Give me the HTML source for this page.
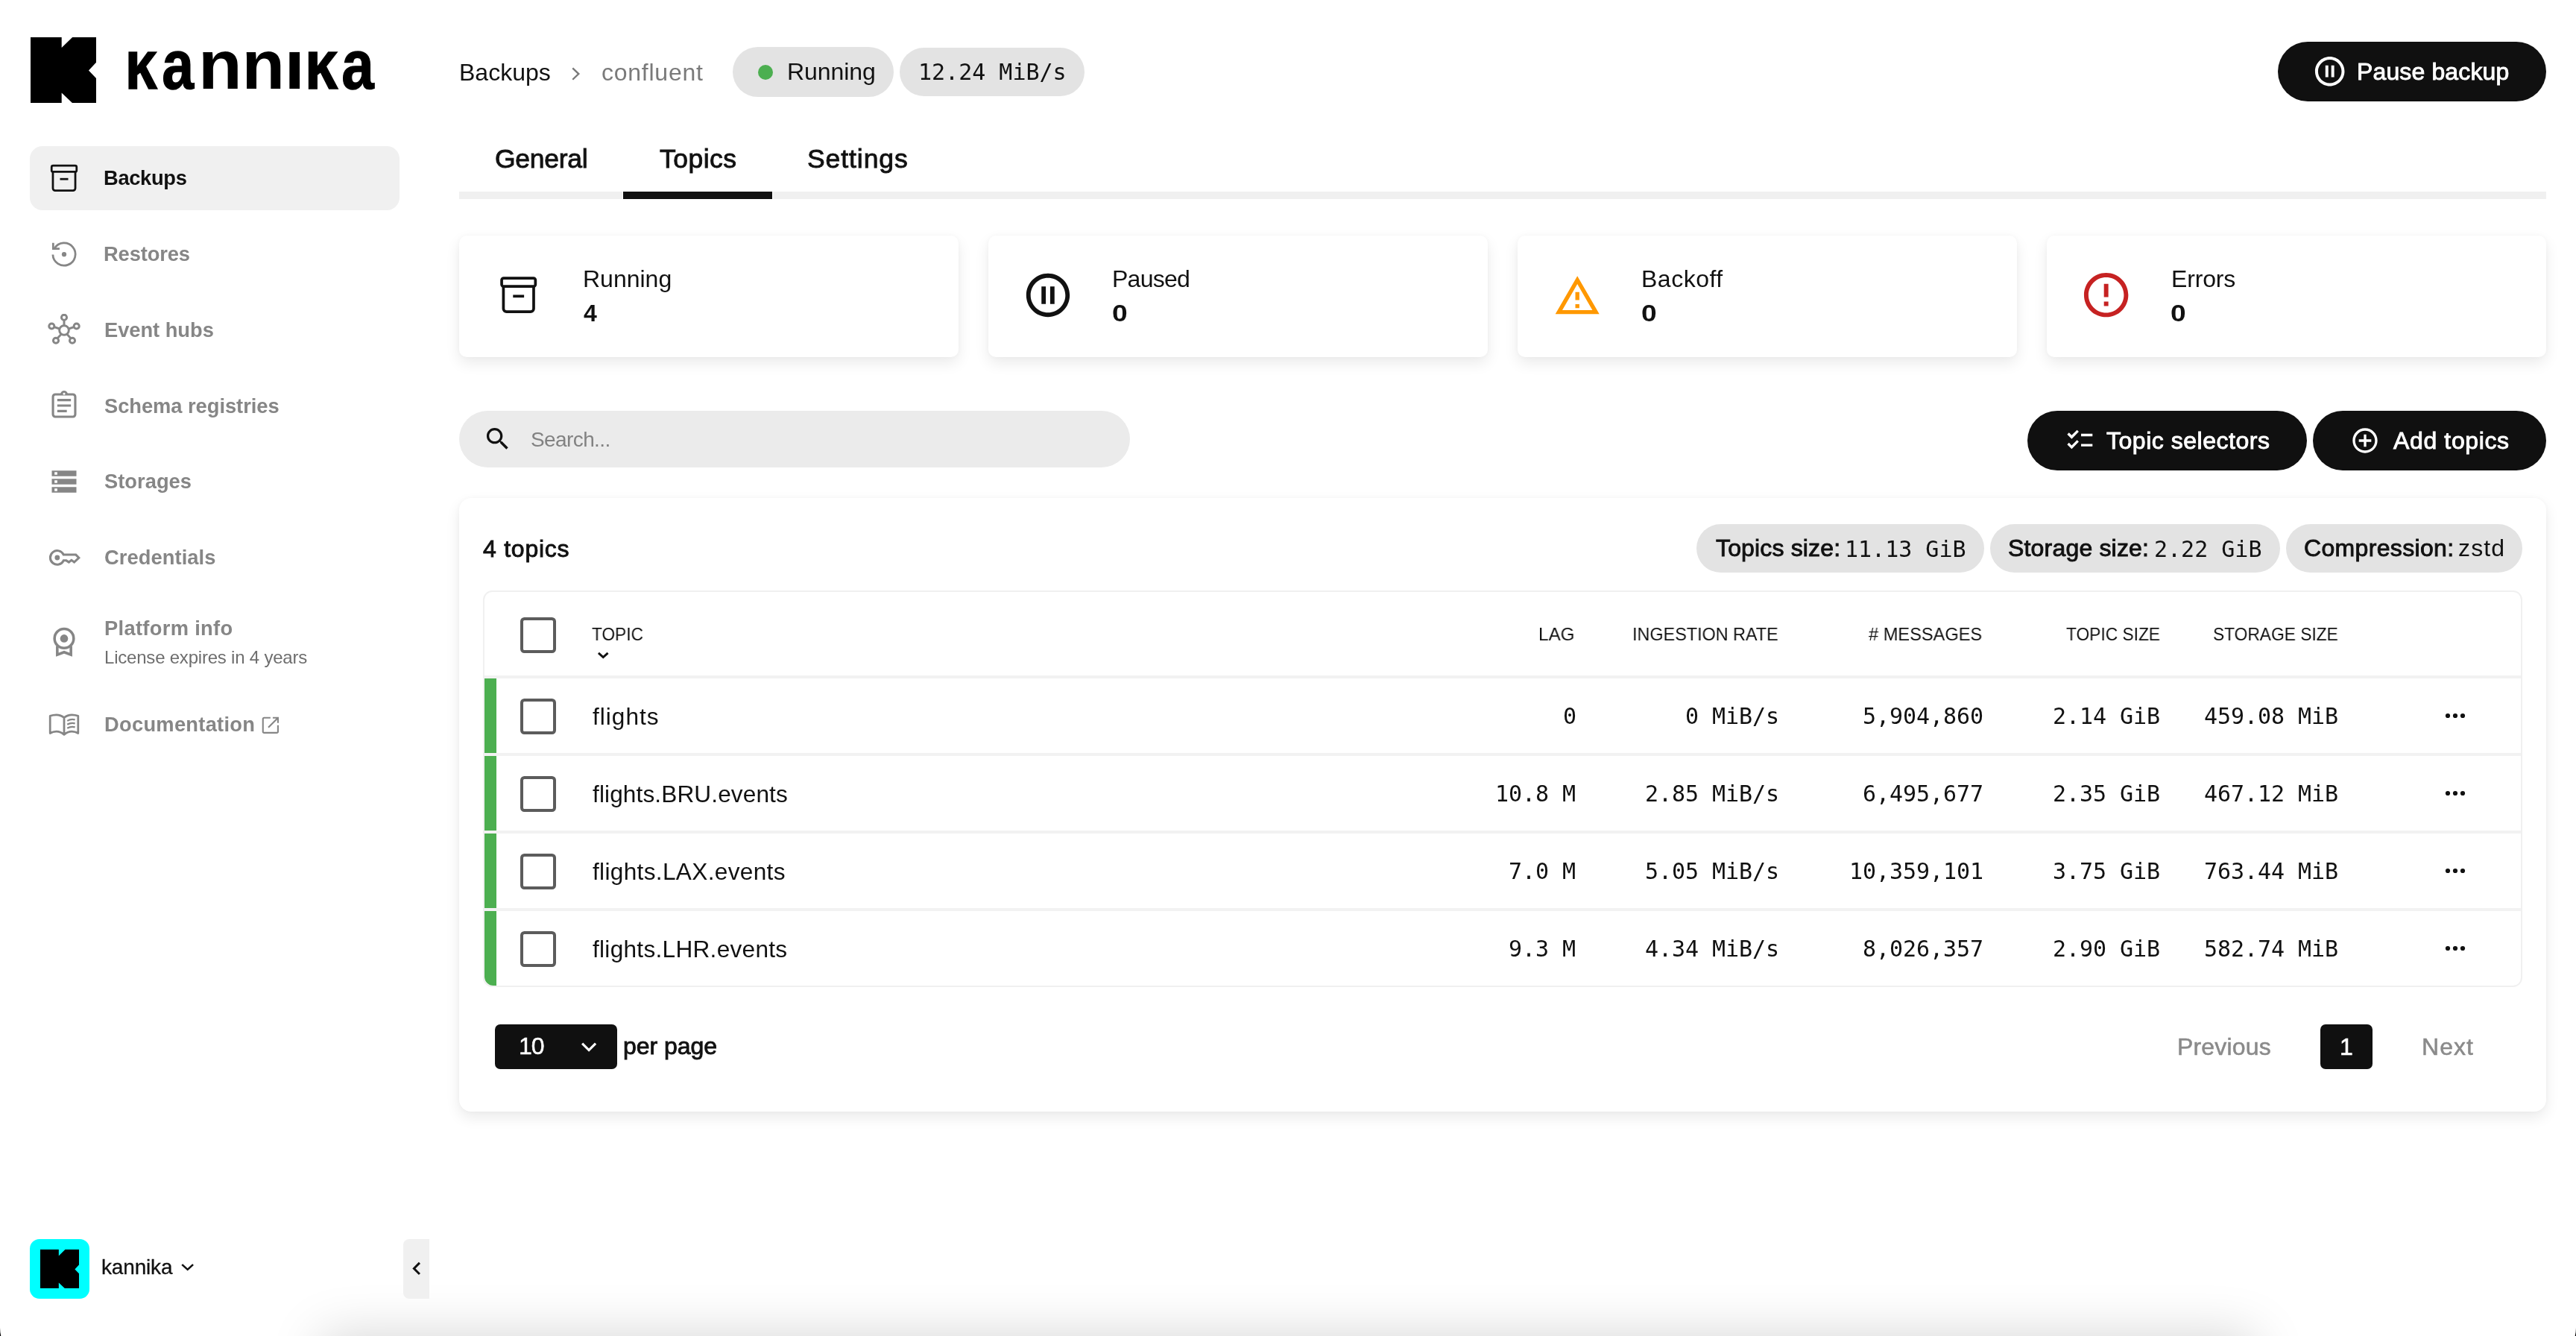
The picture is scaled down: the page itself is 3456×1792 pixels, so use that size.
<!DOCTYPE html>
<html lang="en"><head><meta charset="utf-8"><title>Kannika Armory - Backups - confluent - Topics</title>
<style>
*{box-sizing:border-box;margin:0;padding:0}
html,body{width:3456px;height:1792px;overflow:hidden;background:#fff}
body{position:relative;font-family:"Liberation Sans",sans-serif;color:#111;-webkit-font-smoothing:antialiased}
.b{position:absolute;display:block}
.t{position:absolute;white-space:nowrap;will-change:transform}
.s{font-family:"Liberation Sans",sans-serif}
.m{font-family:"DejaVu Sans Mono","Liberation Mono",monospace}
</style></head>
<body>
<div class="b" style="left:432px;top:1792px;width:2592px;height:200px;background:#000;box-shadow:0 0 70px rgba(0,0,0,0.172)"></div>
<svg class="b" style="left:0;top:1781px" width="3" height="11" viewBox="0 0 3 11"><path d="M0 0 Q0.1 7 1.3 11 H0Z" fill="#000"/></svg>
<svg class="b" style="left:3453px;top:1781px" width="3" height="11" viewBox="0 0 3 11"><path d="M3 0 Q2.9 7 1.7 11 H3Z" fill="#000"/></svg>
<svg class="b" style="left:41.2px;top:50.3px" width="88.2" height="88.2" viewBox="0 0 88 88"><polygon fill="#000" points="0,0 41.6,0 41.6,14 56,0 88,0 88,33.6 77.8,44.3 88,55 88,88 56,88 41.6,74.4 41.6,88 0,88"/></svg>
<svg class="b" style="left:160px;top:40px" width="360" height="110" viewBox="160 40 360 110" font-family="Liberation Sans, sans-serif" font-weight="700" font-size="93" fill="#000"><text y="119.2"><tspan x="167.59" textLength="43.49" lengthAdjust="spacingAndGlyphs" stroke="#000" stroke-width="1.3" stroke-linejoin="miter">ĸ</tspan><tspan x="217.19" textLength="42.89" lengthAdjust="spacingAndGlyphs" stroke="#000" stroke-width="1.3" stroke-linejoin="miter">a</tspan><tspan x="265.97" textLength="58.68" lengthAdjust="spacingAndGlyphs">n</tspan><tspan x="324.59" textLength="57.54" lengthAdjust="spacingAndGlyphs">n</tspan><tspan x="381.32" textLength="27.78" lengthAdjust="spacingAndGlyphs">ı</tspan><tspan x="408.65" textLength="44.63" lengthAdjust="spacingAndGlyphs" stroke="#000" stroke-width="1.3" stroke-linejoin="miter">ĸ</tspan><tspan x="458.36" textLength="43.52" lengthAdjust="spacingAndGlyphs" stroke="#000" stroke-width="1.3" stroke-linejoin="miter">a</tspan></text></svg>
<div class="b" style="left:40px;top:196px;width:496px;height:86px;background:#f0f0f0;border-radius:17px"></div>
<svg class="b" style="left:64px;top:217px;color:#111" width="44" height="44" viewBox="0 0 24 24" fill="#111"><g fill="none" stroke="currentColor" stroke-width="1.5"><rect x="2.85" y="2.85" width="18.3" height="4.5" rx="1.1"/><path d="M3.8 7.6V19.4a1.7 1.7 0 0 0 1.7 1.7H18.5a1.7 1.7 0 0 0 1.7-1.7V7.6"/><path d="M9 12.65H15"/></g></svg>
<div class="t s" style="left:139.30px;top:223.69px;font-size:27.3px;line-height:30.494px;color:#111;font-weight:700;letter-spacing:-0.317px;">Backups</div>
<svg class="b" style="left:64px;top:319px;color:#868686" width="44" height="44" viewBox="0 0 24 24" fill="#868686"><g fill="none" stroke="currentColor" stroke-width="1.5"><path d="M3.75 12.3A8.25 8.25 0 1 0 4.95 7.7"/><path d="M4 3.7V8H8.7" stroke-linejoin="miter"/></g><circle cx="12" cy="12.1" r="1.7" fill="currentColor"/></svg>
<div class="t s" style="left:139.30px;top:325.79px;font-size:27.3px;line-height:30.494px;color:#868686;font-weight:700;letter-spacing:-0.129px;">Restores</div>
<svg class="b" style="left:64px;top:421px;color:#868686" width="44" height="44" viewBox="0 0 24 24" fill="#868686"><g fill="none" stroke="currentColor" stroke-width="1.6"><circle cx="12" cy="12" r="3.45"/><circle cx="12" cy="2.6" r="1.95"/><circle cx="2.9" cy="9" r="1.95"/><circle cx="21.1" cy="9" r="1.95"/><circle cx="6" cy="19.5" r="1.95"/><circle cx="18" cy="19.5" r="1.95"/><path d="M12 4.55v4M4.75 9.6l3.95 1.3M19.25 9.6l-3.95 1.3M7.15 17.9l2.8-3.1M16.85 17.9l-2.8-3.1"/></g></svg>
<div class="t s" style="left:139.60px;top:427.99px;font-size:27.3px;line-height:30.494px;color:#868686;font-weight:700;letter-spacing:-0.033px;">Event hubs</div>
<svg class="b" style="left:64px;top:522.2px;color:#868686" width="44" height="44" viewBox="0 0 24 24" fill="#868686"><g fill="none" stroke="currentColor" stroke-width="1.7"><rect x="3.850" y="3.850" width="16.300" height="16.300" rx="1.700"/><path d="M7 8H17M7 12H17M7 16H14"/></g><path d="M9.100 3.900C9.500 2.100 10.600 1.100 12 1.100 13.400 1.100 14.500 2.100 14.900 3.900Z" fill="currentColor"/><circle cx="12" cy="3.400" r=".800" fill="#fff"/></svg>
<div class="t s" style="left:139.60px;top:529.69px;font-size:27.3px;line-height:30.494px;color:#868686;font-weight:700;letter-spacing:-0.037px;">Schema registries</div>
<svg class="b" style="left:64px;top:624px;color:#868686" width="44" height="44" viewBox="0 0 24 24" fill="#868686"><path d="M3 20v-4h18v4H3Zm2-1h2v-2H5v2ZM3 8V4h18v4H3Zm2-1h2V5H5v2Zm-2 7v-4h18v4H3Zm2-1h2v-2H5v2Z" /></svg>
<div class="t s" style="left:139.60px;top:630.69px;font-size:27.3px;line-height:30.494px;color:#868686;font-weight:700;letter-spacing:0.029px;">Storages</div>
<svg class="b" style="left:64px;top:726px;color:#868686" width="44" height="44" viewBox="0 0 24 24" fill="#868686"><g fill="none" stroke="currentColor" stroke-width="1.65" stroke-linejoin="miter"><path d="M11.6 9.85H20.6L22.85 12.1 19.4 15.3 17.4 13.8 15.5 15.3 13.6 14.1H11.6A5.1 5.1 0 1 1 11.6 9.85Z"/></g><circle cx="7" cy="12" r="1.85" fill="currentColor"/></svg>
<div class="t s" style="left:139.60px;top:732.79px;font-size:27.3px;line-height:30.494px;color:#868686;font-weight:700;letter-spacing:0.080px;">Credentials</div>
<svg class="b" style="left:64px;top:838.8px;color:#868686" width="44" height="44" viewBox="0 0 24 24" fill="#868686"><g fill="none" stroke="currentColor" stroke-width="1.95"><circle cx="12" cy="9.5" r="7"/><path d="M7 15V21.4L12 19.5 17 21.4V15" stroke-linejoin="miter" stroke-miterlimit="10"/></g><circle cx="12" cy="9.5" r="2.9" fill="currentColor"/></svg>
<div class="t s" style="left:139.60px;top:828.29px;font-size:27.3px;line-height:30.494px;color:#868686;font-weight:700;letter-spacing:0.317px;">Platform info</div>
<div class="t s" style="left:139.60px;top:869.08px;font-size:24px;line-height:26.808px;color:#6e6e6e;letter-spacing:-0.208px;">License expires in 4 years</div>
<svg class="b" style="left:64px;top:950px;color:#868686" width="44" height="44" viewBox="0 0 24 24" fill="#868686"><g fill="none" stroke="currentColor" stroke-width="1.5" stroke-linejoin="round" stroke-linecap="round"><path d="M12 6.9C10.5 5.6 8.5 4.8 6.3 4.8 4.7 4.8 3.1 5.100 1.750 5.600V18.300C3.100 17.500 4.700 17 6.300 17 8.500 17 10.500 17.900 12 19.300 13.500 17.900 15.500 17 17.700 17 19.300 17 20.900 17.500 22.250 18.300V5.600C20.900 5.100 19.300 4.800 17.700 4.800 15.500 4.800 13.500 5.600 12 6.900ZM12 6.900V19.300"/><path d="M14.300 9.200C16 8.200 18.100 7.900 20 8.400M14.300 11.900C16 10.900 18.100 10.600 20 11.100M14.300 14.600C16 13.600 18.100 13.300 20 13.800" stroke-width="1.25" stroke-linecap="butt"/></g></svg>
<div class="t s" style="left:139.90px;top:956.79px;font-size:27.3px;line-height:30.494px;color:#868686;font-weight:700;letter-spacing:0.275px;">Documentation</div>
<svg class="b" style="left:348.1px;top:957.7px;color:#868686" width="29.7" height="29.7" viewBox="0 0 24 24" fill="#868686"><g fill="none" stroke="currentColor" stroke-width="1.700"><path d="M12 3.850H5.100A1.250 1.250 0 0 0 3.850 5.100V18.900A1.250 1.250 0 0 0 5.100 20.150H18.900A1.250 1.250 0 0 0 20.150 18.900V12"/><path d="M14.500 3.850H20.150V9.500M20 4 9.700 14.300"/></g></svg>
<div class="b" style="left:40px;top:1662px;width:80px;height:80px;background:#00ffff;border-radius:13px"></div>
<svg class="b" style="left:53.9px;top:1675.6px" width="52.5" height="52.6" viewBox="0 0 88 88"><polygon fill="#000" points="0,0 41.6,0 41.6,14 56,0 88,0 88,33.6 77.8,44.3 88,55 88,88 56,88 41.6,74.4 41.6,88 0,88"/></svg>
<div class="t s" style="left:136.40px;top:1684.26px;font-size:28px;line-height:31.276px;color:#111;letter-spacing:-0.167px;-webkit-text-stroke:0.3px #111;">kannika</div>
<svg class="b" style="left:239px;top:1691px" width="28" height="21" viewBox="0 0 28 21"><polyline points="5.22,5.12 12.65,11.86 20.08,5.12" fill="none" stroke="#111" stroke-width="2.6" stroke-linejoin="miter"/></svg>
<div class="b" style="left:541px;top:1662px;width:35px;height:80px;background:#f0f0f0;border-radius:8px 0 0 8px"></div>
<svg class="b" style="left:549px;top:1688px" width="22" height="29" viewBox="0 0 22 29"><polyline points="13.94,5.86 6.42,13.45 13.94,21.04" fill="none" stroke="#111" stroke-width="3" stroke-linejoin="miter"/></svg>
<div class="t s" style="left:615.90px;top:79.54px;font-size:32px;line-height:35.744px;color:#111;letter-spacing:0.017px;">Backups</div>
<svg class="b" style="left:763px;top:86px" width="22" height="29" viewBox="0 0 22 29"><polyline points="5.25,5.35 13.30,13.05 5.25,20.75" fill="none" stroke="#7a7a7a" stroke-width="2.4" stroke-linejoin="miter"/></svg>
<div class="t s" style="left:807.00px;top:79.54px;font-size:32px;line-height:35.744px;color:#7a7a7a;letter-spacing:0.750px;">confluent</div>
<div class="b" style="left:983px;top:63px;width:216px;height:67px;background:#e3e3e3;border-radius:34px"></div>
<div class="b" style="left:1016.7px;top:86.7px;width:20.6px;height:20.6px;background:#4caf50;border-radius:50%"></div>
<div class="t s" style="left:1055.90px;top:78.84px;font-size:32px;line-height:35.744px;color:#111;letter-spacing:-0.050px;">Running</div>
<div class="b" style="left:1207px;top:64px;width:248px;height:64.5px;background:#e3e3e3;border-radius:33px"></div>
<div class="t m" style="left:1232.10px;top:79.96px;font-size:30px;line-height:34.92px;color:#111;">12.24 MiB/s</div>
<div class="b" style="left:3056px;top:56px;width:360px;height:80px;background:#101010;border-radius:40px"></div>
<svg class="b" style="left:3102.2px;top:72.2px;color:#fff" width="47.4" height="47.4" viewBox="0 0 24 24" fill="#fff"><path d="M9 16h2V8H9v8zm3-14C6.48 2 2 6.48 2 12s4.48 10 10 10 10-4.48 10-10S17.52 2 12 2zm0 18c-4.41 0-8-3.59-8-8s3.59-8 8-8 8 3.59 8 8-3.59 8-8 8zm1-4h2V8h-2v8z" /></svg>
<div class="t s" style="left:3161.50px;top:78.84px;font-size:32px;line-height:35.744px;color:#fff;letter-spacing:0.136px;-webkit-text-stroke:0.9px #fff;">Pause backup</div>
<div class="b" style="left:616px;top:257px;width:2800px;height:10px;background:#f0f0f0"></div>
<div class="b" style="left:834.8px;top:257px;width:202.4px;height:10px;background:#fff"></div>
<div class="b" style="left:836px;top:257px;width:200px;height:10px;background:#101010"></div>
<div class="t s" style="left:663.60px;top:194.47px;font-size:35.5px;line-height:39.654px;color:#111;letter-spacing:-0.267px;-webkit-text-stroke:0.9px #111;">General</div>
<div class="t s" style="left:884.60px;top:194.47px;font-size:35.5px;line-height:39.654px;color:#111;letter-spacing:0.480px;-webkit-text-stroke:0.9px #111;">Topics</div>
<div class="t s" style="left:1083.00px;top:194.47px;font-size:35.5px;line-height:39.654px;color:#111;letter-spacing:0.929px;-webkit-text-stroke:0.9px #111;">Settings</div>
<div class="b" style="left:616px;top:315.5px;width:670px;height:163px;background:#fff;border-radius:10px;box-shadow:0 8px 19px rgba(0,0,0,0.082),0 0 6px rgba(0,0,0,0.03)"></div>
<svg class="b" style="left:666.2px;top:366px;color:#111" width="59.4" height="59.4" viewBox="0 0 24 24" fill="#111"><g fill="none" stroke="currentColor" stroke-width="1.5"><rect x="2.85" y="2.85" width="18.3" height="4.5" rx="1.1"/><path d="M3.8 7.6V19.4a1.7 1.7 0 0 0 1.7 1.7H18.5a1.7 1.7 0 0 0 1.7-1.7V7.6"/><path d="M9 12.65H15"/></g></svg>
<div class="t s" style="left:782.00px;top:356.84px;font-size:32px;line-height:35.744px;color:#111;">Running</div>
<div class="t s" style="left:783.00px;top:403.34px;font-size:32px;line-height:35.744px;color:#111;font-weight:700;transform:scaleX(0.9889);transform-origin:0 0;">4</div>
<div class="b" style="left:1326px;top:315.5px;width:670px;height:163px;background:#fff;border-radius:10px;box-shadow:0 8px 19px rgba(0,0,0,0.082),0 0 6px rgba(0,0,0,0.03)"></div>
<svg class="b" style="left:1371px;top:360.7px;color:#111" width="70" height="70" viewBox="0 0 24 24" fill="#111"><path d="M9 16h2V8H9v8zm3-14C6.48 2 2 6.48 2 12s4.48 10 10 10 10-4.48 10-10S17.52 2 12 2zm0 18c-4.41 0-8-3.59-8-8s3.59-8 8-8 8 3.59 8 8-3.59 8-8 8zm1-4h2V8h-2v8z" /></svg>
<div class="t s" style="left:1492.20px;top:356.84px;font-size:32px;line-height:35.744px;color:#111;letter-spacing:-0.740px;">Paused</div>
<div class="t s" style="left:1492.24px;top:403.34px;font-size:32px;line-height:35.744px;color:#111;font-weight:700;transform:scaleX(1.1625);transform-origin:0 0;">0</div>
<div class="b" style="left:2036px;top:315.5px;width:670px;height:163px;background:#fff;border-radius:10px;box-shadow:0 8px 19px rgba(0,0,0,0.082),0 0 6px rgba(0,0,0,0.03)"></div>
<svg class="b" style="left:2083.8px;top:364.8px;color:#ff9800" width="64.4" height="64.4" viewBox="0 0 24 24" fill="#ff9800"><path d="M12 5.99L19.53 19H4.47L12 5.99M12 2L1 21h22L12 2zm1 14h-2v2h2v-2zm0-6h-2v4h2v-4z" /></svg>
<div class="t s" style="left:2202.20px;top:356.84px;font-size:32px;line-height:35.744px;color:#111;letter-spacing:0.517px;">Backoff</div>
<div class="t s" style="left:2202.24px;top:403.34px;font-size:32px;line-height:35.744px;color:#111;font-weight:700;transform:scaleX(1.1625);transform-origin:0 0;">0</div>
<div class="b" style="left:2746px;top:315.5px;width:670px;height:163px;background:#fff;border-radius:10px;box-shadow:0 8px 19px rgba(0,0,0,0.082),0 0 6px rgba(0,0,0,0.03)"></div>
<svg class="b" style="left:2790.3px;top:360.3px;color:#c62222" width="71.3" height="71.3" viewBox="0 0 24 24" fill="#c62222"><path d="M11 15h2v2h-2zm0-8h2v6h-2zm.99-5C6.47 2 2 6.48 2 12s4.47 10 9.99 10C17.52 22 22 17.52 22 12S17.52 2 11.99 2zM12 20c-4.42 0-8-3.58-8-8s3.58-8 8-8 8 3.58 8 8-3.58 8-8 8z" /></svg>
<div class="t s" style="left:2912.60px;top:356.84px;font-size:32px;line-height:35.744px;color:#111;letter-spacing:-0.160px;">Errors</div>
<div class="t s" style="left:2912.24px;top:403.34px;font-size:32px;line-height:35.744px;color:#111;font-weight:700;transform:scaleX(1.1625);transform-origin:0 0;">0</div>
<div class="b" style="left:616px;top:551px;width:900px;height:76px;background:#ebebeb;border-radius:38px"></div>
<svg class="b" style="left:648.2px;top:569.1px;color:#111" width="39.5" height="39.5" viewBox="0 0 24 24" fill="#111"><path d="M15.5 14h-.79l-.28-.27C15.41 12.59 16 11.11 16 9.5 16 5.91 13.09 3 9.5 3S3 5.91 3 9.5 5.91 16 9.5 16c1.61 0 3.09-.59 4.23-1.57l.27.28v.79l5 4.99L20.49 19l-4.99-5zm-6 0C7.01 14 5 11.99 5 9.5S7.01 5 9.5 5 14 7.01 14 9.5 11.99 14 9.5 14z" /></svg>
<div class="t s" style="left:712.10px;top:574.26px;font-size:28px;line-height:31.276px;color:#828282;letter-spacing:-0.600px;">Search...</div>
<div class="b" style="left:2720px;top:551px;width:374.5px;height:80px;background:#101010;border-radius:40px"></div>
<svg class="b" style="left:2770.1px;top:569.6px;color:#fff" width="40.7" height="40.7" viewBox="0 0 24 24" fill="#fff"><path d="M22 7h-9v2h9V7zm0 8h-9v2h9v-2zM5.54 11L2 7.46l1.41-1.41 2.12 2.12 4.24-4.24 1.41 1.41L5.54 11zm0 8L2 15.46l1.41-1.41 2.12 2.12 4.24-4.24 1.41 1.41L5.54 19z" /></svg>
<div class="t s" style="left:2825.60px;top:573.84px;font-size:32px;line-height:35.744px;color:#fff;letter-spacing:0.521px;-webkit-text-stroke:0.9px #fff;">Topic selectors</div>
<div class="b" style="left:3103px;top:551px;width:313px;height:80px;background:#101010;border-radius:40px"></div>
<svg class="b" style="left:3152.6px;top:570.6px;color:#fff" width="40" height="40" viewBox="0 0 24 24" fill="#fff"><path d="M13 7h-2v4H7v2h4v4h2v-4h4v-2h-4V7zm-1-5C6.48 2 2 6.48 2 12s4.48 10 10 10 10-4.48 10-10S17.52 2 12 2zm0 18c-4.41 0-8-3.59-8-8s3.59-8 8-8 8 3.59 8 8-3.59 8-8 8z" /></svg>
<div class="t s" style="left:3210.60px;top:573.84px;font-size:32px;line-height:35.744px;color:#fff;letter-spacing:0.633px;-webkit-text-stroke:0.9px #fff;">Add topics</div>
<div class="b" style="left:616px;top:668px;width:2800px;height:823px;background:#fff;border-radius:16px;box-shadow:0 8px 19px rgba(0,0,0,0.082),0 0 6px rgba(0,0,0,0.03)"></div>
<div class="t s" style="left:648.40px;top:718.54px;font-size:32px;line-height:35.744px;color:#111;letter-spacing:0.757px;-webkit-text-stroke:0.9px #111;">4 topics</div>
<div class="b" style="left:2276px;top:703px;width:386px;height:65px;background:#e3e3e3;border-radius:33px"></div>
<div class="b" style="left:2670px;top:703px;width:389px;height:65px;background:#e3e3e3;border-radius:33px"></div>
<div class="b" style="left:3067px;top:703px;width:317px;height:65px;background:#e3e3e3;border-radius:33px"></div>
<div class="t s" style="left:2301.50px;top:718.44px;font-size:32px;line-height:35.744px;color:#111;letter-spacing:0.155px;-webkit-text-stroke:0.9px #111;">Topics size:</div>
<div class="t m" style="left:2474.50px;top:719.56px;font-size:30px;line-height:34.92px;color:#111;">11.13 GiB</div>
<div class="t s" style="left:2694.00px;top:718.44px;font-size:32px;line-height:35.744px;color:#111;letter-spacing:0.183px;-webkit-text-stroke:0.9px #111;">Storage size:</div>
<div class="t m" style="left:2890.10px;top:719.56px;font-size:30px;line-height:34.92px;color:#111;">2.22 GiB</div>
<div class="t s" style="left:3091.30px;top:718.44px;font-size:32px;line-height:35.744px;color:#111;letter-spacing:0.336px;-webkit-text-stroke:0.9px #111;">Compression:</div>
<div class="t s" style="left:3298.20px;top:718.44px;font-size:32px;line-height:35.744px;color:#111;letter-spacing:1.133px;">zstd</div>
<div class="b" style="left:648.3px;top:792.4px;width:2735.4px;height:531.6px;border:2px solid #f0f0f0;border-radius:12.5px"></div>
<div class="b" style="left:698px;top:828px;width:48px;height:48px;border:4px solid #5c5c5c;border-radius:5.5px;background:#fff"></div>
<div class="t s" style="left:794.40px;top:836.73px;font-size:24.5px;line-height:27.366px;color:#111;transform:scaleX(0.9257);transform-origin:0 0;">TOPIC</div>
<svg class="b" style="left:797px;top:870px" width="26" height="20" viewBox="0 0 26 20"><polyline points="5.93,5.83 12.25,11.65 18.57,5.83" fill="none" stroke="#111" stroke-width="2.9" stroke-linejoin="miter"/></svg>
<div class="t s" style="left:2064.23px;top:836.73px;font-size:24.5px;line-height:27.366px;color:#111;transform:scaleX(0.9870);transform-origin:0 0;">LAG</div>
<div class="t s" style="left:2190.19px;top:836.73px;font-size:24.5px;line-height:27.366px;color:#111;transform:scaleX(0.9540);transform-origin:0 0;">INGESTION RATE</div>
<div class="t s" style="left:2507.00px;top:836.73px;font-size:24.5px;line-height:27.366px;color:#111;transform:scaleX(0.9637);transform-origin:0 0;"># MESSAGES</div>
<div class="t s" style="left:2772.00px;top:836.73px;font-size:24.5px;line-height:27.366px;color:#111;transform:scaleX(0.9289);transform-origin:0 0;">TOPIC SIZE</div>
<div class="t s" style="left:2969.37px;top:836.73px;font-size:24.5px;line-height:27.366px;color:#111;transform:scaleX(0.9291);transform-origin:0 0;">STORAGE SIZE</div>
<div class="b" style="left:650px;top:906px;width:2732px;height:4px;background:#f2f2f2"></div>
<div class="b" style="left:650px;top:910px;width:16px;height:100px;background:#4caf50;"></div>
<div class="b" style="left:650px;top:1010px;width:2732px;height:4px;background:#f2f2f2"></div>
<div class="b" style="left:698px;top:937.2px;width:48px;height:48px;border:4px solid #5c5c5c;border-radius:5.5px;background:#fff"></div>
<div class="t s" style="left:794.90px;top:944.30px;font-size:31.6px;line-height:35.297px;color:#111;letter-spacing:1.017px;">flights</div>
<div class="t m" style="left:2096.60px;top:944.16px;font-size:30px;line-height:34.92px;color:#111;letter-spacing:-0.060px;">0</div>
<div class="t m" style="left:2260.66px;top:944.16px;font-size:30px;line-height:34.92px;color:#111;letter-spacing:-0.060px;">0 MiB/s</div>
<div class="t m" style="left:2498.78px;top:944.16px;font-size:30px;line-height:34.92px;color:#111;letter-spacing:-0.060px;">5,904,860</div>
<div class="t m" style="left:2753.92px;top:944.16px;font-size:30px;line-height:34.92px;color:#111;letter-spacing:-0.060px;">2.14 GiB</div>
<div class="t m" style="left:2957.14px;top:944.16px;font-size:30px;line-height:34.92px;color:#111;letter-spacing:-0.060px;">459.08 MiB</div>
<svg class="b" style="left:3274px;top:950px" width="40" height="20" viewBox="0 0 40 20"><circle cx="10" cy="10" r="3.1" fill="#111"/><circle cx="20" cy="10" r="3.1" fill="#111"/><circle cx="30" cy="10" r="3.1" fill="#111"/></svg>
<div class="b" style="left:650px;top:1014px;width:16px;height:100px;background:#4caf50;"></div>
<div class="b" style="left:650px;top:1114px;width:2732px;height:4px;background:#f2f2f2"></div>
<div class="b" style="left:698px;top:1041.2px;width:48px;height:48px;border:4px solid #5c5c5c;border-radius:5.5px;background:#fff"></div>
<div class="t s" style="left:794.90px;top:1048.30px;font-size:31.6px;line-height:35.297px;color:#111;letter-spacing:0.112px;">flights.BRU.events</div>
<div class="t m" style="left:2005.90px;top:1048.16px;font-size:30px;line-height:34.92px;color:#111;letter-spacing:-0.060px;">10.8 M</div>
<div class="t m" style="left:2206.84px;top:1048.16px;font-size:30px;line-height:34.92px;color:#111;letter-spacing:-0.060px;">2.85 MiB/s</div>
<div class="t m" style="left:2498.78px;top:1048.16px;font-size:30px;line-height:34.92px;color:#111;letter-spacing:-0.060px;">6,495,677</div>
<div class="t m" style="left:2753.92px;top:1048.16px;font-size:30px;line-height:34.92px;color:#111;letter-spacing:-0.060px;">2.35 GiB</div>
<div class="t m" style="left:2957.14px;top:1048.16px;font-size:30px;line-height:34.92px;color:#111;letter-spacing:-0.060px;">467.12 MiB</div>
<svg class="b" style="left:3274px;top:1054px" width="40" height="20" viewBox="0 0 40 20"><circle cx="10" cy="10" r="3.1" fill="#111"/><circle cx="20" cy="10" r="3.1" fill="#111"/><circle cx="30" cy="10" r="3.1" fill="#111"/></svg>
<div class="b" style="left:650px;top:1118px;width:16px;height:100px;background:#4caf50;"></div>
<div class="b" style="left:650px;top:1218px;width:2732px;height:4px;background:#f2f2f2"></div>
<div class="b" style="left:698px;top:1145.2px;width:48px;height:48px;border:4px solid #5c5c5c;border-radius:5.5px;background:#fff"></div>
<div class="t s" style="left:794.90px;top:1152.30px;font-size:31.6px;line-height:35.297px;color:#111;letter-spacing:0.329px;">flights.LAX.events</div>
<div class="t m" style="left:2023.84px;top:1152.16px;font-size:30px;line-height:34.92px;color:#111;letter-spacing:-0.060px;">7.0 M</div>
<div class="t m" style="left:2206.84px;top:1152.16px;font-size:30px;line-height:34.92px;color:#111;letter-spacing:-0.060px;">5.05 MiB/s</div>
<div class="t m" style="left:2480.84px;top:1152.16px;font-size:30px;line-height:34.92px;color:#111;letter-spacing:-0.060px;">10,359,101</div>
<div class="t m" style="left:2753.92px;top:1152.16px;font-size:30px;line-height:34.92px;color:#111;letter-spacing:-0.060px;">3.75 GiB</div>
<div class="t m" style="left:2957.14px;top:1152.16px;font-size:30px;line-height:34.92px;color:#111;letter-spacing:-0.060px;">763.44 MiB</div>
<svg class="b" style="left:3274px;top:1158px" width="40" height="20" viewBox="0 0 40 20"><circle cx="10" cy="10" r="3.1" fill="#111"/><circle cx="20" cy="10" r="3.1" fill="#111"/><circle cx="30" cy="10" r="3.1" fill="#111"/></svg>
<div class="b" style="left:650px;top:1222px;width:16px;height:100px;background:#4caf50;border-radius:0 0 0 12px;"></div>
<div class="b" style="left:698px;top:1249.2px;width:48px;height:48px;border:4px solid #5c5c5c;border-radius:5.5px;background:#fff"></div>
<div class="t s" style="left:794.90px;top:1256.30px;font-size:31.6px;line-height:35.297px;color:#111;letter-spacing:0.282px;">flights.LHR.events</div>
<div class="t m" style="left:2023.84px;top:1256.16px;font-size:30px;line-height:34.92px;color:#111;letter-spacing:-0.060px;">9.3 M</div>
<div class="t m" style="left:2206.84px;top:1256.16px;font-size:30px;line-height:34.92px;color:#111;letter-spacing:-0.060px;">4.34 MiB/s</div>
<div class="t m" style="left:2498.78px;top:1256.16px;font-size:30px;line-height:34.92px;color:#111;letter-spacing:-0.060px;">8,026,357</div>
<div class="t m" style="left:2753.92px;top:1256.16px;font-size:30px;line-height:34.92px;color:#111;letter-spacing:-0.060px;">2.90 GiB</div>
<div class="t m" style="left:2957.14px;top:1256.16px;font-size:30px;line-height:34.92px;color:#111;letter-spacing:-0.060px;">582.74 MiB</div>
<svg class="b" style="left:3274px;top:1262px" width="40" height="20" viewBox="0 0 40 20"><circle cx="10" cy="10" r="3.1" fill="#111"/><circle cx="20" cy="10" r="3.1" fill="#111"/><circle cx="30" cy="10" r="3.1" fill="#111"/></svg>
<div class="b" style="left:664px;top:1374px;width:164px;height:60px;background:#101010;border-radius:7px"></div>
<div class="t s" style="left:696.20px;top:1386.34px;font-size:32px;line-height:35.744px;color:#fff;letter-spacing:-1.100px;-webkit-text-stroke:0.5px #fff;">10</div>
<svg class="b" style="left:776px;top:1394px" width="32" height="24" viewBox="0 0 32 24"><polyline points="5.13,5.63 14.10,14.54 23.07,5.63" fill="none" stroke="#fff" stroke-width="3.2" stroke-linejoin="miter"/></svg>
<div class="t s" style="left:836.40px;top:1386.34px;font-size:32px;line-height:35.744px;color:#111;letter-spacing:-0.029px;-webkit-text-stroke:0.9px #111;">per page</div>
<div class="t s" style="left:2921.00px;top:1386.84px;font-size:32px;line-height:35.744px;color:#8a8a8a;letter-spacing:0.186px;-webkit-text-stroke:0.5px #8a8a8a;">Previous</div>
<div class="b" style="left:3113px;top:1374px;width:70px;height:60px;background:#101010;border-radius:7px"></div>
<div class="t s" style="left:3139.10px;top:1386.84px;font-size:32px;line-height:35.744px;color:#fff;-webkit-text-stroke:0.7px #fff;">1</div>
<div class="t s" style="left:3248.60px;top:1386.84px;font-size:32px;line-height:35.744px;color:#8a8a8a;letter-spacing:1.067px;-webkit-text-stroke:0.5px #8a8a8a;">Next</div>
</body></html>
